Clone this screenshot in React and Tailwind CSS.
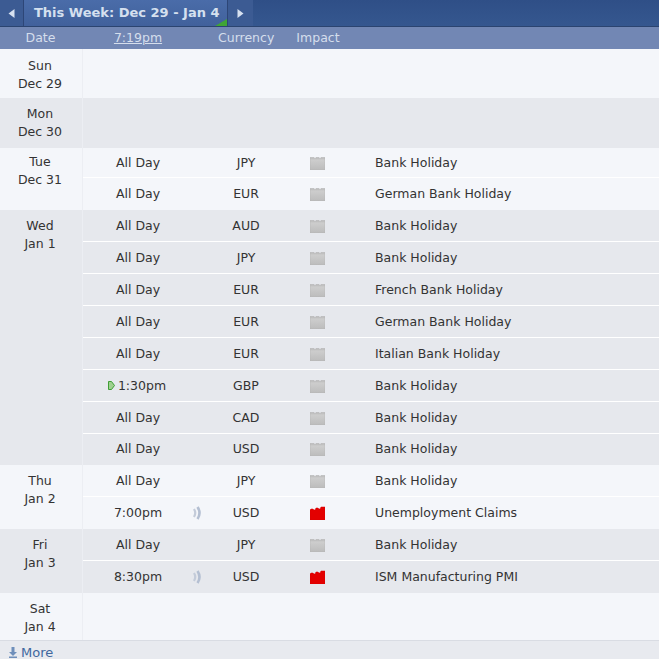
const days = [
  { day: "Sun", date: "Dec 29", height: "h-[49px]", pt: "pt-[8px]", rows: [] },
  { day: "Mon", date: "Dec 30", height: "h-[50px]", pt: "pt-[7px]", alt: true, rows: [] },
  {
    day: "Tue",
    date: "Dec 31",
    pt: "pt-[5px]",
    rows: [
      { h: "h-[30px]", time: "All Day", cur: "JPY", title: "Bank Holiday" },
      { h: "h-[32px]", time: "All Day", cur: "EUR", title: "German Bank Holiday" },
    ],
  },
  {
    day: "Wed",
    date: "Jan 1",
    pt: "pt-[7px]",
    alt: true,
    rows: [
      { h: "h-[32px]", time: "All Day", cur: "AUD", title: "Bank Holiday" },
      { h: "h-[32px]", time: "All Day", cur: "JPY", title: "Bank Holiday" },
      { h: "h-[32px]", time: "All Day", cur: "EUR", title: "French Bank Holiday" },
      { h: "h-[32px]", time: "All Day", cur: "EUR", title: "German Bank Holiday" },
      { h: "h-[32px]", time: "All Day", cur: "EUR", title: "Italian Bank Holiday" },
      { h: "h-[32px]", time: "1:30pm", cur: "GBP", title: "Bank Holiday", next: true },
      { h: "h-[32px]", time: "All Day", cur: "CAD", title: "Bank Holiday" },
      { h: "h-[31px]", time: "All Day", cur: "USD", title: "Bank Holiday" },
    ],
  },
  {
    day: "Thu",
    date: "Jan 2",
    pt: "pt-[7px]",
    rows: [
      { h: "h-[32px]", time: "All Day", cur: "JPY", title: "Bank Holiday" },
      { h: "h-[32px]", time: "7:00pm", cur: "USD", title: "Unemployment Claims", high: true },
    ],
  },
  {
    day: "Fri",
    date: "Jan 3",
    pt: "pt-[7px]",
    alt: true,
    rows: [
      { h: "h-[32px]", time: "All Day", cur: "JPY", title: "Bank Holiday" },
      { h: "h-[32px]", time: "8:30pm", cur: "USD", title: "ISM Manufacturing PMI", high: true },
    ],
  },
  { day: "Sat", date: "Jan 4", height: "h-[47px]", pt: "pt-[7px]", rows: [] },
];

function ImpactIcon({ high }) {
  if (high) {
    return (
      <svg width="15" height="14" viewBox="0 0 15 14" className="block">
        <path
          d="M0 14 V4 L1 3 H3 L4 4 H5 L6 2 H8 L9 3 H10 L11 1 H15 V14 Z"
          fill="#e30000"
          stroke="#d40000"
          strokeWidth="0.5"
        />
      </svg>
    );
  }
  return (
    <svg width="15" height="13" viewBox="0 0 15 13" className="block">
      <defs>
        <linearGradient id="grey" x1="0" y1="0" x2="0" y2="1">
          <stop offset="0" stopColor="#b8b8b8" />
          <stop offset="0.2" stopColor="#cdcdcd" />
          <stop offset="1" stopColor="#bcbcbc" />
        </linearGradient>
      </defs>
      <path
        d="M0 0.5 H4 V1.2 H6 V0.5 H9 V1.2 H11 V0.5 H15 V13 H0 Z"
        fill="url(#grey)"
        stroke="#b0b0b0"
        strokeWidth="0.5"
      />
    </svg>
  );
}

function SoundIcon() {
  return (
    <svg width="10" height="14" viewBox="0 0 10 14" className="block">
      <path d="M1 3 Q3.5 7 1 11" fill="none" stroke="#c3cbd9" strokeWidth="2.2" />
      <path d="M4.5 1 Q8.5 7 4.5 13" fill="none" stroke="#b4bfd2" strokeWidth="2.6" />
    </svg>
  );
}

function EventRow({ row, last }) {
  return (
    <div className={`flex items-center ${row.h} ${last ? "" : "border-b border-white pt-[2px]"}`}>
      <div className="relative w-[110px] text-center">
        {row.next && (
          <svg
            width="7"
            height="9"
            viewBox="0 0 7 9"
            className="absolute left-[25px] top-[4px]">
            <path d="M0.5 0.5 L3.5 0.5 L6.5 4.5 L3.5 8.5 L0.5 8.5 Z" fill="#9fd08f" stroke="#3f9e36" />
          </svg>
        )}
        <span className={row.next ? "pl-[8px]" : ""}>{row.time}</span>
      </div>
      <div className="w-[10px] flex justify-center">{row.high && <SoundIcon />}</div>
      <div className="w-[50px] text-center ml-[18px]">{row.cur}</div>
      <div className="w-[15px] ml-[39px]">
        <ImpactIcon high={row.high} />
      </div>
      <div className="ml-[50px]">{row.title}</div>
    </div>
  );
}

function DayGroup({ group }) {
  return (
    <div className={`flex ${group.alt ? "bg-[#e6e8ed]" : "bg-[#f4f6fa]"} ${group.height || ""}`}>
      <div className={`w-[83px] shrink-0 border-r border-[#eceef3] text-center pr-[2px] leading-[18px] ${group.pt}`}>
        <div>{group.day}</div>
        <div>{group.date}</div>
      </div>
      <div className="flex-1 flex flex-col">
        {group.rows.map((row, i) => (
          <EventRow key={i} row={row} last={i === group.rows.length - 1} />
        ))}
      </div>
    </div>
  );
}

export default function App() {
  return (
    <div className="w-[659px] h-[659px] overflow-hidden bg-[#e8eaef] text-[12.5px] text-[#333333] font-['DejaVu_Sans',sans-serif]">
      {/* Week switcher */}
      <div className="flex h-[27px] bg-gradient-to-b from-[#2f4f87] to-[#35578f] border-b border-[#2b4470]">
        <div className="w-[24px] flex items-center justify-center bg-[#3c5b93] border-r border-[#2d4677]">
          <svg width="7" height="9" viewBox="0 0 7 9"><path d="M6.5 0 L6.5 9 L0.5 4.5 Z" fill="#d7e1f0" /></svg>
        </div>
        <div className="relative w-[204px] bg-gradient-to-b from-[#4a6ca9] to-[#41619c] border-r border-[#2d4677] pl-[10px] text-[13px] leading-[25px] font-bold text-[#d5e0ef]">
          This Week: Dec 29 - Jan 4
          <div className="absolute right-0 bottom-0 w-0 h-0 border-l-[12px] border-b-[7px] border-l-transparent border-b-[#3fa535]" />
        </div>
        <div className="w-[25px] flex items-center justify-center bg-[#3c5b93]">
          <svg width="7" height="9" viewBox="0 0 7 9"><path d="M0.5 0 L0.5 9 L6.5 4.5 Z" fill="#d7e1f0" /></svg>
        </div>
      </div>

      {/* Column headers */}
      <div className="flex items-center h-[22px] bg-[#7287b4] text-[#d5deec]">
        <div className="w-[83px] text-center pr-[2px]">Date</div>
        <div className="w-[110px] text-center underline">7:19pm</div>
        <div className="ml-[25px]">Currency</div>
        <div className="ml-[22px]">Impact</div>
      </div>

      {days.map((group) => (
        <DayGroup key={group.date} group={group} />
      ))}

      {/* More link */}
      <div className="h-[19px] flex items-center pl-[8px] pt-[5px] border-t border-[#d9dce3] bg-[#e8eaef] text-[13px] text-[#41689f] gap-[3px]">
        <svg width="10" height="11" viewBox="0 0 10 11">
          <path d="M3.5 0 H6.5 V5 H9 L5 9 L1 5 H3.5 Z M1 9.5 H9 V11 H1 Z" fill="#6f8fbb" />
        </svg>
        More
      </div>
    </div>
  );
}
